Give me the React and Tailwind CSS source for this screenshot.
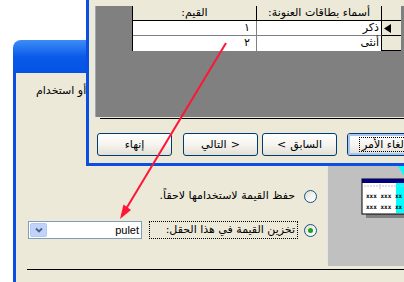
import React from 'react';

const ar = "font-['DejaVu_Sans',sans-serif]";

function XPButton({ children, isDefault = false, className = '' }) {
    return (
        <div
            className={`h-[23px] w-[75px] shrink-0 rounded-[3px] border border-[#003c74] bg-gradient-to-b from-[#ffffff] via-[#f5f4ef] to-[#e3e0d3] flex items-center justify-center ${className}`}
        >
            {isDefault ? (
                <div className="w-full h-full rounded-[2px] border-2 border-[#a8c4f2] flex items-center justify-center">
                    <span className="border border-dotted border-black px-[2px] leading-[13px] whitespace-nowrap">{children}</span>
                </div>
            ) : (
                <span className="leading-[13px] flex items-center gap-[4px] whitespace-nowrap">{children}</span>
            )}
        </div>
    );
}

function Radio({ checked }) {
    return (
        <div className="w-[13px] h-[13px] shrink-0 rounded-full border border-[#1c5180] bg-gradient-to-br from-[#dcdcd6] via-[#f3f3ef] to-white flex items-center justify-center">
            {checked && <div className="w-[5px] h-[5px] rounded-full bg-[#21a121]" />}
        </div>
    );
}

export default function App() {
    return (
        <div className={`relative w-[404px] h-[282px] overflow-hidden bg-white text-[11px] text-black ${ar}`}>
            {/* back window: option group wizard */}
            <div className="absolute left-[13px] top-[40px] w-[420px] h-[260px] flex flex-col">
                <div className="h-[33px] rounded-tl-[8px] bg-gradient-to-b from-[#3d8cf7] via-[#0a5be9] to-[#0352e4]" />
                <div className="flex-1 bg-[#ece9d8] border-l-[3px] border-[#0a4ee3] flex flex-col">
                    <div className="pt-[11px] pl-[20px] leading-[13px] whitespace-nowrap">
                        <span dir="rtl" className="inline-block">تخزين القيمة في حقل أو استخدام</span>
                    </div>

                    <div className="mt-[13px] h-[156px] flex">
                        {/* options */}
                        <div className="w-[311px] flex flex-col justify-end pb-[27px] pr-[10px]">
                            <div className="h-[18px] flex items-center justify-end">
                                <div dir="rtl" className="h-[18px] px-[2px] border border-transparent flex items-center whitespace-nowrap">
                                    حفظ القيمة لاستخدامها لاحقاً.
                                </div>
                                <div className="w-[6px]" />
                                <Radio />
                            </div>
                            <div className="mt-[16px] h-[18px] flex items-center justify-end">
                                <div className="w-[114px] h-[18px] border border-[#7f9db9] bg-white flex items-center">
                                    <div className="ml-[1px] w-[17px] h-[14px] rounded-[2px] bg-[#c1d3fb] border border-[#b4c8f4] flex items-center justify-center">
                                        <svg width="8" height="6" viewBox="0 0 8 6">
                                            <path d="M1 1.5 L4 4.5 L7 1.5" fill="none" stroke="#4d6185" strokeWidth="1.8" />
                                        </svg>
                                    </div>
                                    <span className="ml-auto mr-[2px] leading-[13px] font-['Liberation_Sans',sans-serif]">pulet</span>
                                </div>
                                <div className="w-[7px]" />
                                <div dir="rtl" className="w-[149px] h-[18px] px-[2px] border border-dotted border-black flex items-center whitespace-nowrap">
                                    تخزين القيمة  في هذا الحقل:
                                </div>
                                <div className="w-[6px]" />
                                <Radio checked />
                            </div>
                        </div>

                        {/* preview picture */}
                        <div className="flex-1 bg-[#c0c0c0] border-l border-[#e4e4e4]">
                            <svg width="100" height="156" viewBox="0 0 100 156" className="block">
                                <polygon points="66,50 88,50 77,67" fill="#00ffff" />
                                <rect x="38" y="72" width="70" height="36" fill="#808080" />
                                <rect x="34" y="69" width="70" height="35" fill="#ffffff" stroke="#000" strokeWidth="1" />
                                <rect x="34" y="69" width="70" height="4" fill="#000080" />
                                <rect x="68" y="73" width="36" height="30" fill="#00ffff" />
                                <line x1="36" y1="76" x2="104" y2="76" stroke="#c0c0c0" strokeDasharray="2 1" />
                                <line x1="52" y1="74" x2="52" y2="80" stroke="#c0c0c0" strokeDasharray="2 1" />
                                <text x="38" y="88" fontSize="6" fontWeight="bold" fontFamily="DejaVu Sans Mono" fill="#000">xxx xxx xx</text>
                                <text x="38" y="99" fontSize="6" fontWeight="bold" fontFamily="DejaVu Sans Mono" fill="#000">xxx xxx xx</text>
                            </svg>
                        </div>
                    </div>

                    <div className="mt-[3px] ml-[11px] h-px bg-black" />
                </div>
            </div>

            {/* front window: label values datasheet */}
            <div className="absolute left-[86px] top-0 w-[330px] h-[166px] bg-[#ece9d8] border-l-[3px] border-b-[3px] border-[#0a4ee3] flex flex-col">
                <div className="pt-[6px] pl-[6px]">
                    <div className="h-[111px] bg-[#808080] border-l border-[#9aa8b8] pl-[36px]">
                        <div className="w-[269px] border-l border-black grid grid-cols-[124px_125px_19px]">
                            <div className="h-[15px] border-b border-r border-black bg-[#ece9d8] text-center leading-[14px]" dir="rtl">القيم:</div>
                            <div className="h-[15px] border-b border-r border-black bg-[#ece9d8] text-center leading-[14px]" dir="rtl">أسماء بطاقات العنونة:</div>
                            <div className="h-[15px] border-b border-black bg-[#ece9d8]" />

                            <div className="h-[15px] border-b border-r border-[#808080] bg-white text-right pr-[6px] leading-[14px]">١</div>
                            <div className="h-[15px] border-b border-r border-[#808080] border-r-black bg-white text-right pr-[2px] leading-[14px]" dir="rtl">ذكر</div>
                            <div className="h-[15px] border-b border-black bg-[#ece9d8] flex items-center pl-[2px]">
                                <svg width="7" height="9" viewBox="0 0 7 9"><polygon points="7,0 7,9 0,4.5" fill="#000" /></svg>
                            </div>

                            <div className="h-[15px] border-r border-[#808080] bg-white text-right pr-[6px] leading-[14px]">٢</div>
                            <div className="h-[15px] border-r border-black bg-white text-right pr-[2px] leading-[14px]" dir="rtl">أنثى</div>
                            <div className="h-[15px] border-b border-black bg-[#ece9d8]" />
                        </div>
                    </div>
                </div>
                <div className="mt-[1px] ml-[11px] h-px bg-black" />
                <div className="mt-[14px] ml-[8px] flex">
                    <XPButton>إنهاء</XPButton>
                    <XPButton className="ml-[11px]"><span>التالي</span><span>&gt;</span></XPButton>
                    <XPButton className="ml-[4px]"><span>&lt;</span><span>السابق</span></XPButton>
                    <XPButton className="ml-[10px]" isDefault>إلغاء الأمر</XPButton>
                </div>
            </div>

            {/* red arrow drawn over both windows */}
            <svg className="absolute left-0 top-0 pointer-events-none" width="404" height="282" viewBox="0 0 404 282">
                <line x1="226" y1="43" x2="126" y2="209" stroke="#ff1535" strokeWidth="2" />
                <polygon points="120,219 131,210 123.5,204.5" fill="#ff1535" />
            </svg>
        </div>
    );
}
